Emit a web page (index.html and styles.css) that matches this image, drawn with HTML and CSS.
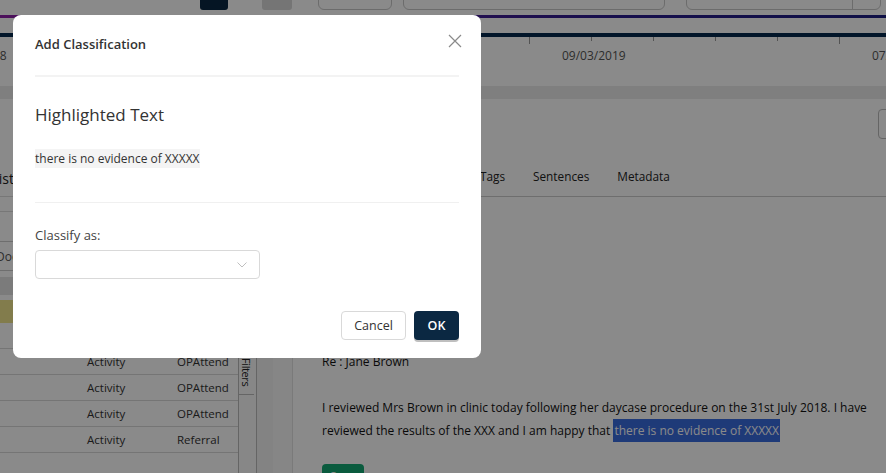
FILE: index.html
```html
<!DOCTYPE html>
<html lang="en">
<head>
    <meta charset="UTF-8">
    <title>Document Review</title>
    <link rel="stylesheet" href="styles.css">
</head>
<body>
    <div class="topbar">
        <span class="tb-btn dark"></span>
        <span class="tb-btn light"></span>
        <span class="tb-input small"></span>
        <span class="tb-input wide"></span>
        <span class="tb-select"><span class="tb-select-btn"></span></span>
    </div>

    <div class="timeline">
        <div class="tl-gradient"></div>
        <div class="tl-axis"></div>
        <div class="tl-ticks">
            <span class="tick"></span><span class="tick"></span><span class="tick"></span>
            <span class="tick"></span><span class="tick"></span><span class="tick"></span>
            <span class="tick"></span><span class="tick"></span><span class="tick major"></span>
            <span class="tick"></span><span class="tick"></span><span class="tick"></span>
            <span class="tick"></span><span class="tick major"></span>
        </div>
        <span class="tl-label" style="left: -57px">13/11/2018</span>
        <span class="tl-label" style="left: 562px">09/03/2019</span>
        <span class="tl-label" style="left: 872px">07/07/2019</span>
    </div>
    <div class="strip"></div>

    <div class="main">
        <div class="list-panel">
            <div class="list-title"><span>Document List</span></div>
            <div class="list-gap"></div>
            <div class="list-search"><span>Document type</span></div>
            <div class="list-head"></div>
            <div class="list-row selected"></div>
            <div class="list-row"></div>
            <div class="list-row"><span class="c1">Activity</span><span class="c2">OPAttend</span></div>
            <div class="list-row"><span class="c1">Activity</span><span class="c2">OPAttend</span></div>
            <div class="list-row"><span class="c1">Activity</span><span class="c2">OPAttend</span></div>
            <div class="list-row"><span class="c1">Activity</span><span class="c2">Referral</span></div>
        </div>
        <div class="filters-col">
            <div class="filters-top"></div>
            <div class="filters-tab"><span>Filters</span></div>
        </div>
        <div class="gutter"><div class="gutter-a"></div><div class="gutter-b"></div></div>

        <div class="doc-panel">
            <div class="doc-header"><span class="doc-btn"></span></div>
            <div class="doc-tabs">
                <span>Document</span><span>Entities</span><span>Tags</span><span>Sentences</span><span>Metadata</span>
            </div>
            <div class="doc-body">
                <p>Re : Jane Brown</p>
                <p class="para">I reviewed Mrs Brown in clinic today following her daycase procedure on the 31st July 2018. I have reviewed the results of the XXX and I am happy that <mark>there is no evidence of XXXXX</mark></p>
                <span class="green-btn">Save</span>
            </div>
        </div>
    </div>

    <div class="overlay"></div>

    <div class="modal">
        <div class="modal-head">
            <span class="modal-title">Add Classification</span>
            <svg class="close" width="14" height="14" viewBox="0 0 14 14">
                <path d="M1 1 L13 13 M13 1 L1 13" stroke="#8a8a8a" stroke-width="1.2" fill="none"/>
            </svg>
        </div>
        <div class="modal-section">
            <h2>Highlighted Text</h2>
            <span class="quote">there is no evidence of XXXXX</span>
        </div>
        <div class="modal-section form">
            <label>Classify as:</label>
            <div class="select">
                <svg width="10" height="6" viewBox="0 0 10 6">
                    <path d="M0.5 0.5 L5 5 L9.5 0.5" stroke="#bfbfbf" stroke-width="1" fill="none"/>
                </svg>
            </div>
        </div>
        <div class="modal-foot">
            <button class="btn cancel">Cancel</button>
            <button class="btn ok">OK</button>
        </div>
    </div>
</body>
</html>
```

FILE: styles.css
```css
body {
    margin: 0;
    width: 886px;
    height: 473px;
    overflow: hidden;
    font-family: 'Open Sans', 'Noto Sans', sans-serif;
    font-size: 12px;
    color: #222;
    background: #fff;
    position: relative;
}

/* top toolbar, mostly scrolled out of view */
.topbar {
    height: 15px;
    display: flex;
    align-items: flex-end;
    padding-bottom: 10px;
    box-sizing: border-box;
}

.topbar > span {
    display: block;
    height: 20px;
    margin-bottom: -5px;
    box-sizing: border-box;
}

.tb-btn {
    width: 28px;
    border-radius: 3px;
}

.tb-btn.dark {
    margin-left: 200px;
    background: #0a2844;
}

.tb-btn.light {
    margin-left: 34px;
    background: #d8d8d8;
    width: 30px;
}

.tb-input {
    border: 1px solid #c8c8c8;
    border-radius: 6px;
}

.tb-input.small {
    margin-left: 26px;
    width: 74px;
}

.tb-input.wide {
    margin-left: 11px;
    width: 262px;
}

.tb-select {
    margin-left: 21px;
    width: 195px;
    border: 1px solid #c8c8c8;
    border-radius: 6px;
    display: flex !important;
    justify-content: flex-end;
}

.tb-select-btn {
    width: 27px;
    border-left: 1px solid #c8c8c8;
}

/* timeline chart */
.timeline {
    position: relative;
    height: 71px;
}

.tl-gradient {
    height: 3px;
    background: linear-gradient(90deg, #8d1fa8, #2a1d8e 70%, #1d1e82);
}

.tl-axis {
    height: 4px;
    margin-top: 15px;
    background: #03274d;
}

.tl-ticks {
    display: flex;
    padding-left: 33px;
    gap: 61px;
}

.tick {
    width: 1px;
    height: 4px;
    background: #9a9a9a;
}

.tick.major {
    height: 7px;
}

.tl-label {
    position: absolute;
    top: 32px;
    font-size: 12px;
    color: #555;
    white-space: nowrap;
}

.strip {
    height: 13px;
    background: #ebebeb;
}

/* main area */
.main {
    display: flex;
    height: 374px;
}

.list-panel {
    width: 238px;
    flex-shrink: 0;
}

.list-title {
    height: 98px;
    box-sizing: border-box;
    padding-top: 70px;
    font-size: 14px;
    border-bottom: 1px solid #ddd;
}

.list-title span {
    display: inline-block;
    width: 100px;
    margin-left: -86px;
    text-align: right;
}

.list-gap {
    height: 14px;
    border-bottom: 1px solid #ddd;
}

.list-search {
    height: 28px;
    margin-top: 29px;
    border-top: 1px solid #ccc;
    border-bottom: 1px solid #ccc;
    display: flex;
    align-items: center;
    color: #555;
    text-indent: -4px;
}

.list-head {
    height: 18px;
    margin-top: 6px;
    background: #e4e4e4;
}

.list-row {
    height: 25px;
    border-bottom: 1px solid #d8d8d8;
    display: flex;
    align-items: center;
    color: #333;
    font-size: 11.5px;
}

.list-row.selected {
    margin-top: 5px;
    height: 23px;
    background: #f0e68d;
    border-bottom: none;
}

.list-row .c1 {
    margin-left: 87px;
    width: 90px;
}

.filters-col {
    width: 19px;
    flex-shrink: 0;
    border-left: 1px solid #bbb;
    border-right: 1px solid #bbb;
    box-sizing: border-box;
    background: #fafafa;
}

.filters-top {
    height: 231px;
}

.filters-tab {
    height: 65px;
    border-bottom: 1px solid #bbb;
    writing-mode: vertical-rl;
    display: flex;
    align-items: center;
    justify-content: flex-end;
    padding-bottom: 8px;
    box-sizing: border-box;
    color: #222;
    font-size: 11px;
    letter-spacing: -0.4px;
}

.gutter {
    display: flex;
    width: 36px;
    flex-shrink: 0;
}

.gutter-a {
    width: 16px;
    background: #f2f2f2;
}

.gutter-b {
    width: 20px;
    background: #f7f7f7;
    border-right: 1px solid #e2e2e2;
}

.doc-panel {
    flex: 1;
    min-width: 0;
}

.doc-header {
    height: 55px;
    display: flex;
    justify-content: flex-end;
    align-items: flex-start;
    padding-top: 10px;
    box-sizing: border-box;
}

.doc-btn {
    width: 40px;
    height: 28px;
    margin-right: -34px;
    border: 1px solid #bbb;
    border-radius: 4px;
}

.doc-tabs {
    height: 43px;
    display: flex;
    align-items: center;
    gap: 28px;
    padding-left: 20px;
    padding-top: 2px;
    border-bottom: 1px solid #ccc;
    box-sizing: border-box;
    font-size: 11.8px;
    color: #222;
}

.doc-tabs span:nth-child(2) {
    margin-right: 13px;
}

.doc-body {
    padding: 153px 0 0 29px;
    font-size: 12px;
    color: #111;
}

.doc-body p {
    margin: 0 0 23px;
    line-height: 23px;
}

.doc-body .para {
    margin-bottom: 22px;
    width: 565px;
}

.doc-body mark {
    background: #396bde;
    color: #fff;
    padding: 3px 1px;
}

.green-btn {
    display: inline-block;
    background: #14a874;
    color: #fff;
    padding: 4px 8px;
    border-radius: 4px;
}

/* modal */
.overlay {
    position: absolute;
    inset: 0;
    background: rgba(0, 0, 0, 0.46);
}

.modal {
    position: absolute;
    left: 13px;
    top: 15px;
    width: 468px;
    height: 343px;
    background: #fff;
    border-radius: 8px;
    padding: 0 22px;
    box-sizing: border-box;
}

.modal-head {
    height: 62px;
    display: flex;
    align-items: center;
    justify-content: space-between;
    border-bottom: 2px solid #f3f3f3;
    padding-bottom: 3px;
    box-sizing: border-box;
}

.modal-title {
    font-size: 13px;
    font-weight: 600;
    color: #333;
}

.close {
    margin-right: -3px;
    margin-top: -6px;
}

.modal-section {
    border-bottom: 1px solid #f0f0f0;
    padding: 26px 0 35px;
}

.modal-section h2 {
    margin: 0 0 23px;
    font-size: 17px;
    font-weight: 400;
    color: #333;
    line-height: 24px;
}

.quote {
    background: #f4f4f4;
    color: #333;
    padding: 1px 0;
    font-size: 12px;
}

.modal-section.form {
    border-bottom: none;
    padding: 23px 0 0;
}

.form label {
    display: block;
    font-size: 13px;
    color: #444;
    margin-bottom: 6px;
}

.select {
    width: 225px;
    height: 29px;
    border: 1px solid #d9d9d9;
    border-radius: 4px;
    box-sizing: border-box;
    display: flex;
    align-items: center;
    justify-content: flex-end;
    padding-right: 12px;
}

.modal-foot {
    display: flex;
    justify-content: flex-end;
    gap: 8px;
    margin-top: 32px;
}

.btn {
    font-family: inherit;
    font-size: 12.5px;
    height: 29px;
    border-radius: 4px;
    cursor: pointer;
}

.btn.cancel {
    width: 65px;
    background: #fff;
    border: 1px solid #d9d9d9;
    color: #333;
}

.btn.ok {
    width: 45px;
    background: #0b2842;
    border: none;
    color: #fff;
    font-weight: 600;
    box-shadow: 0 2px 0 rgba(0, 0, 0, 0.25);
}
```
